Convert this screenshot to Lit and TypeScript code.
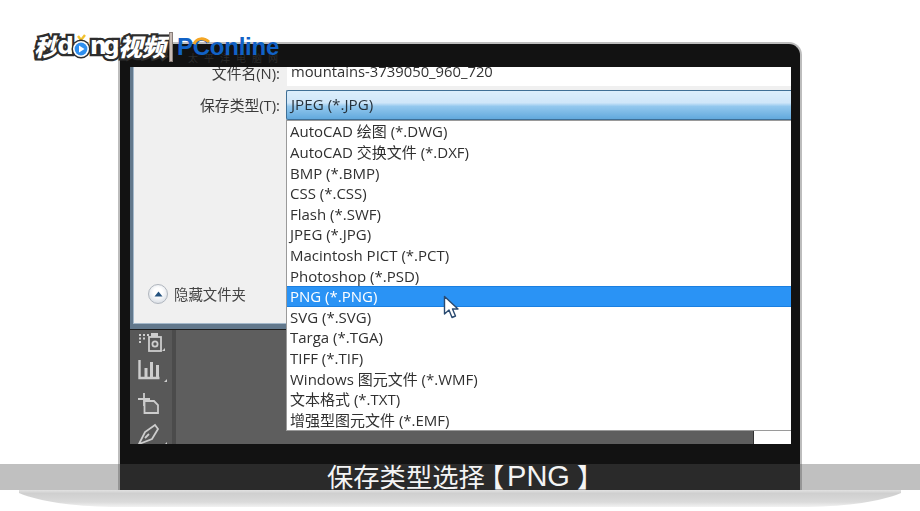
import { LitElement, html, css } from "lit";
import { customElement } from "lit/decorators.js";

const ITEMS = [
  "AutoCAD 绘图 (*.DWG)", "AutoCAD 交换文件 (*.DXF)", "BMP (*.BMP)", "CSS (*.CSS)", "Flash (*.SWF)",
  "JPEG (*.JPG)", "Macintosh PICT (*.PCT)", "Photoshop (*.PSD)", "PNG (*.PNG)", "SVG (*.SVG)",
  "Targa (*.TGA)", "TIFF (*.TIF)", "Windows 图元文件 (*.WMF)", "文本格式 (*.TXT)", "增强型图元文件 (*.EMF)",
];

@customElement("app-root")
export class AppRoot extends LitElement {
  static styles = css`
    :host { display: block; width: 920px; height: 511px; position: relative; overflow: hidden; background: #fff;
      font-family: "Open Sans", "Noto Sans CJK SC", sans-serif; }
    .page { display: flex; flex-direction: column; align-items: center; padding-top: 42px; }
    .frame { width: 684px; height: 448px; box-sizing: border-box; background: #121212;
      border: solid #bdbdbd; border-width: 2px 2px 0 2px; border-radius: 13px 13px 0 0;
      padding: 23px 9px 0 10px; display: flex; flex-direction: column; }
    .mark { height: 0; position: relative; top: -14px; left: 58px; font-size: 10px; line-height: 10px; letter-spacing: 6px; color: #2c2c2c; font-family: "Noto Sans CJK SC", sans-serif; white-space: nowrap; }
    .screen { height: 377px; position: relative; display: flex; flex-direction: column; background: #5e5e5e; overflow: hidden; }
    .dialog { height: 262px; flex: none; box-sizing: border-box; background: #f0f0f0;
      border: solid #62788c; border-width: 0 0 5px 3px; box-shadow: inset 1px 0 0 #a4b8ca, inset 0 -1px 0 #a4b8ca, 0 1px 0 #1c1c1c;
      display: flex; flex-direction: column; position: relative; }
    .row { display: flex; align-items: center; }
    .lab { width: 154px; text-align: right; font-size: 14.8px; color: #3a3a3a; flex: none; padding-right: 7px; box-sizing: border-box; }
    .name-row { height: 19px; align-items: flex-start; }
    .name-row .lab { line-height: 12px; }
    .name { flex: 1; height: 19px; background: #fff; }
    .name span { font-size: 14.8px; color: #333; padding-left: 4px; line-height: 8px; display: block; }
    .type-row { margin-top: 4px; height: 30px; }
    .type-row .lab { padding-bottom: 2px; }
    .combo { flex: 1; height: 30px; margin-left: -1px; box-sizing: border-box; border: 1px solid #3f6f96; border-right: 0; border-radius: 2px 0 0 2px;
      background: linear-gradient(#dceefc 0%, #cfe6f9 42%, #93c8ee 55%, #62a9dd 100%);
      font-size: 15.2px; line-height: 27px; color: #26323c; padding-left: 4px; }
    .hide { position: absolute; left: 15px; top: 216px; display: flex; align-items: center; gap: 6px; font-size: 14.4px; color: #444; }
    .circ { width: 20px; height: 20px; border-radius: 50%; border: 1px solid #b0b6be; box-sizing: border-box;
      background: radial-gradient(circle at 50% 40%, #fff 30%, #d2d8e0 90%); display: flex; align-items: center; justify-content: center; }
    .ps { flex: 1; display: flex; min-height: 0; }
    .tools { width: 46px; flex: none; background: #585858; border-right: 4px solid #4b4b4b; box-sizing: border-box; padding: 2px 0 0 8px; margin-top: 1px; }
    .tools svg { display: block; }
    .menu { position: absolute; left: 156px; top: 53px; width: 505px; height: 311px; background: #fff; box-sizing: border-box;
      border: 1px solid #9a9a9a; border-right: 0; padding-top: .4px; }
    .item { height: 20.6px; line-height: 20.6px; font-size: 15px; color: #303030; padding-left: 3px; white-space: nowrap; }
    .item.on { background: #2a93f5; color: #fff; box-shadow: inset 0 1px 0 #1b7fe0, inset 0 -1px 0 #1b7fe0; }
    .strip { position: absolute; left: 623px; top: 364px; width: 38px; height: 13px; background: #fff; border-left: 1px solid #333; box-sizing: border-box; }
    .base { display: block; }
    .bar { position: absolute; left: 0; top: 464px; width: 920px; height: 26px; box-sizing: border-box; padding: 0 0 2px 327px; background: rgba(83,83,83,.367);
      display: flex; align-items: center; color: #f4f4f4; font-size: 26.3px; line-height: 24px;
      font-family: "Noto Sans CJK SC", sans-serif; white-space: nowrap; }
    .bar .png { font-family: "Liberation Sans", sans-serif; font-size: 29px; margin-left: 3px; }
    .bar .lb { margin-left: -7px; }
    .bar .rb { margin-left: 7px; }
    .cursor { position: absolute; left: 443px; top: 295px; }
    .logo { position: absolute; left: 34px; top: 29px; display: flex; align-items: center; height: 34px; }
    .qd { font-family: "Noto Sans CJK SC", sans-serif; font-weight: 900; font-size: 24px; font-style: italic; color: #fff; letter-spacing: -.5px;
      -webkit-text-stroke: 4.5px #2d2d2d; paint-order: stroke fill; display: flex; align-items: center; line-height: 30px; width: 134px; flex: none; white-space: nowrap; }
    .qd b { font-family: "Inter", sans-serif; font-size: 25px; font-weight: 800; font-style: normal; letter-spacing: -3px; margin: -2px 2px 0 0; }
    .sep { width: 4px; height: 30px; background: #c9bcb6; border: 1px solid #8a7f7a; box-sizing: border-box; margin: 2px 4px 0 1px; flex: none; }
    .pc { font-family: "Liberation Sans", sans-serif; font-weight: 700; color: #1162c6; font-size: 24px; letter-spacing: -.25px; line-height: 30px; margin-top: 1px; position: relative; }
    .arc { position: absolute; left: 14px; top: 4px; }
    .blur { filter: blur(.45px); }
  `;

  render() {
    return html`
      <div class="page">
        <div class="frame">
          <div class="mark">太平洋电脑网</div>
          <div class="screen blur">
            <div class="dialog">
              <div class="row name-row">
                <div class="lab">文件名(N):</div>
                <div class="name"><span>mountains-3739050_960_720</span></div>
              </div>
              <div class="row type-row">
                <div class="lab">保存类型(T):</div>
                <div class="combo">JPEG (*.JPG)</div>
              </div>
              <div class="hide">
                <div class="circ">
                  <svg width="9" height="6" viewBox="0 0 9 6"><path d="M4.5 0.5 L8.5 5.5 H0.5 Z" fill="#24527f"/></svg>
                </div>
                隐藏文件夹
              </div>
            </div>
            <div class="ps">
              <div class="tools">
                <svg width="30" height="113" viewBox="0 0 30 113" fill="none" stroke="#cdcdcd" stroke-width="1.8">
                  <path d="M1 3h2M5 3h2M9 3h2M1 6.5h2M5 6.5h2M1 10h2" stroke-width="2.2"/>
                  <rect x="11" y="5" width="12" height="14"/><rect x="13" y="1" width="7" height="4" fill="#cdcdcd" stroke="none"/>
                  <circle cx="17" cy="12" r="2.6"/>
                  <path d="M27 19h-3l3-3z" fill="#cdcdcd" stroke="none"/>
                  <path d="M1.5 28v18h20" stroke-width="2.4"/>
                  <path d="M8 45v-9M13.5 45v-15M19.5 45v-12" stroke-width="3"/>
                  <path d="M29 50h-3l3-3z" fill="#cdcdcd" stroke="none"/>
                  <path d="M6.5 69H16l4 4v8H6.5z" fill="#666"/>
                  <path d="M0 67h12M6 61v13"/>
                  <path d="M1 112l6-12 10-7 3 4-6 10-13 5zM7 106l4-4"/>
                  <path d="M29 113h-3l3-3z" fill="#cdcdcd" stroke="none"/>
                </svg>
              </div>
              <div style="flex:1"></div>
            </div>
            <div class="menu">
              ${ITEMS.map((t, i) => html`<div class="item ${i === 8 ? "on" : ""}">${t}</div>`)}
            </div>
            <div class="strip"></div>
          </div>
        </div>
        <svg class="base" width="882" height="18" viewBox="0 0 882 18">
          <defs>
            <linearGradient id="g" x1="0" y1="0" x2="0" y2="1">
              <stop offset="0" stop-color="#e2e2e2"/><stop offset=".2" stop-color="#cfcfcf"/><stop offset=".7" stop-color="#dadada"/><stop offset="1" stop-color="#f2f2f2"/>
            </linearGradient>
          </defs>
          <path d="M0 0H882V3C860 12 830 16 790 17H92C52 16 22 12 0 3Z" fill="url(#g)"/>
        </svg>
      </div>
      <div class="bar">保存类型选择<span class="lb">【</span><span class="png">PNG</span><span class="rb">】</span></div>
      <svg class="cursor" width="17" height="25" viewBox="0 0 17 25">
        <path d="M1.5 1.5V19L6 15l3 7.5 3.5-1.5-3-7H15Z" fill="#fff" stroke="#2a4a70" stroke-width="1.4" stroke-linejoin="round"/>
      </svg>
      <div class="logo">
        <div class="qd">秒<b>d</b><svg width="20" height="26" viewBox="0 0 20 26" style="margin:0 -1px -2px -1px;flex:none"><path d="M10 6l-3-4M10 6l4-5" stroke="#f2c12e" stroke-width="2.4" fill="none"/><circle cx="10" cy="15" r="9.5" fill="#2d2d2d"/><circle cx="10" cy="15" r="8" fill="#fff"/><circle cx="10" cy="15" r="6.4" fill="#2f8fee"/><path d="M8 11.5v7l5.5-3.5z" fill="#fff"/></svg><b>ng</b>视频</div>
        <div class="sep"></div>
        <div class="pc">PConline<svg class="arc" width="20" height="9" viewBox="0 0 20 9"><path d="M3 8C6 1.5 13 1.5 18 6" stroke="#f5a623" stroke-width="3" fill="none"/></svg></div>
      </div>
    `;
  }
}
